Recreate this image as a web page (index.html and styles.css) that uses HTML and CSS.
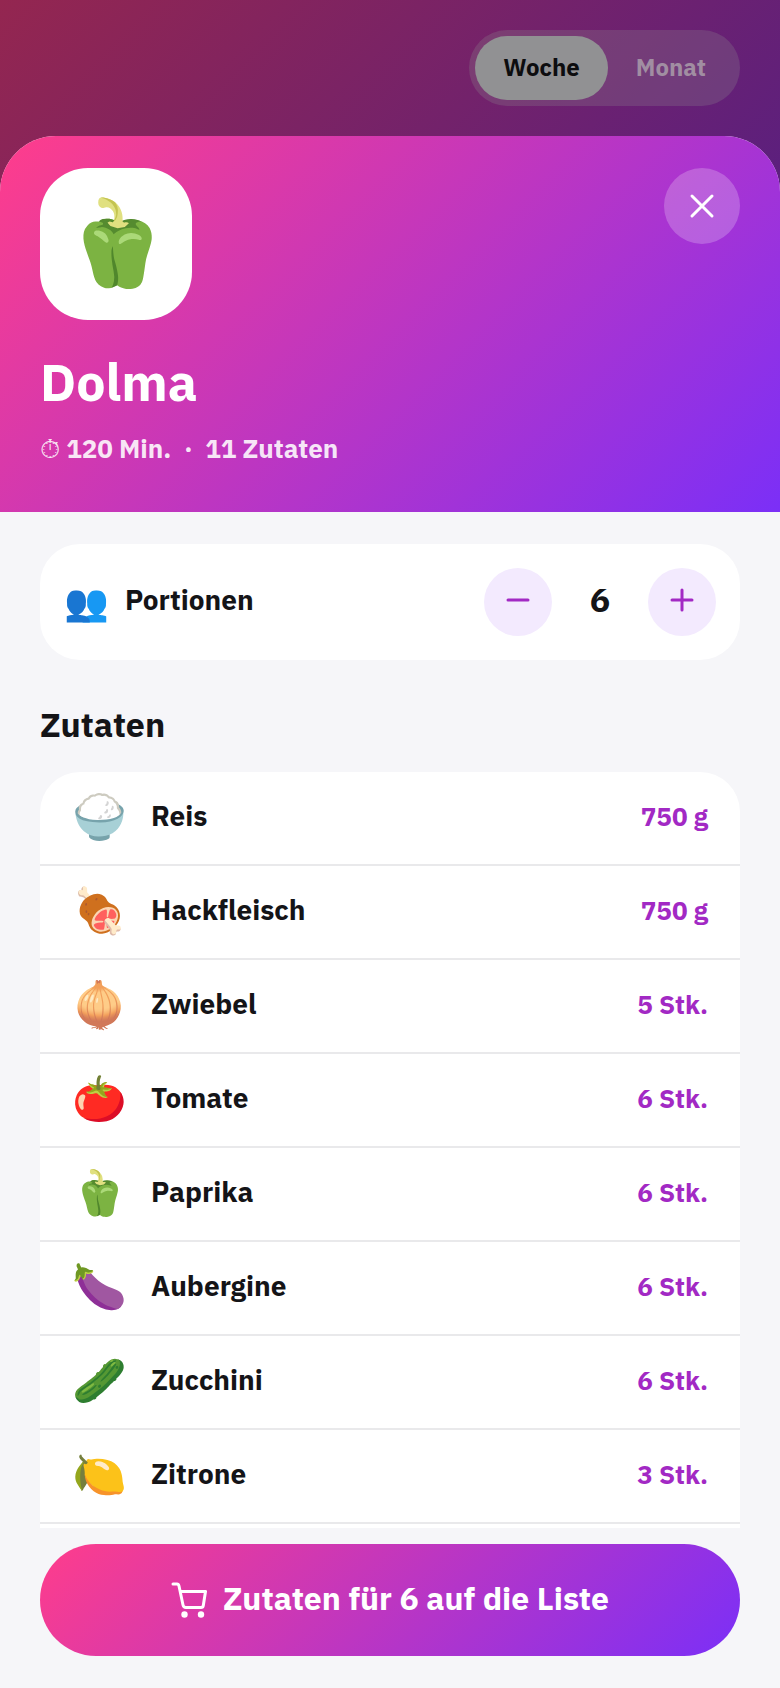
FILE: index.html
```html
<!DOCTYPE html>
<html lang="de">
<head>
<meta charset="utf-8">
<meta name="viewport" content="width=device-width, initial-scale=1">
<title>Dolma</title>
<link rel="stylesheet" href="styles.css">
</head>
<body class="page">
<header class="topbar">
  <div class="switch" role="group" aria-label="Zeitraum">
    <button class="switch-item switch-item-active" type="button">Woche</button>
    <button class="switch-item" type="button">Monat</button>
  </div>
</header>
<main class="sheet">
  <section class="hero">
    <div class="hero-top">
      <div class="dish"><span class="emoji-dish">🫑</span></div>
      <button class="close" type="button" aria-label="Schließen">
        <svg class="close-icon" viewBox="0 0 24 24" aria-hidden="true"><path d="M2 2 22 22M22 2 2 22"/></svg>
      </button>
    </div>
    <h1 class="dish-name">Dolma</h1>
    <p class="meta"><span class="clock">⏱</span> 120 Min. &nbsp;·&nbsp; 11 Zutaten</p>
  </section>
  <div class="content">
    <section class="portions">
      <span class="emoji-people">👥</span>
      <span class="portions-label">Portionen</span>
      <div class="stepper">
        <button class="step" type="button" aria-label="Weniger"><svg class="step-icon" viewBox="0 0 24 24" aria-hidden="true"><path d="M2 12H22"/></svg></button>
        <output class="count">6</output>
        <button class="step" type="button" aria-label="Mehr"><svg class="step-icon" viewBox="0 0 24 24" aria-hidden="true"><path d="M2 12H22M12 2V22"/></svg></button>
      </div>
    </section>
    <h2 class="heading">Zutaten</h2>
    <ul class="list">
      <li class="row"><span class="emoji">🍚</span><span class="name">Reis</span><span class="amount">750 g</span></li>
      <li class="row"><span class="emoji">🍖</span><span class="name">Hackfleisch</span><span class="amount">750 g</span></li>
      <li class="row"><span class="emoji">🧅</span><span class="name">Zwiebel</span><span class="amount">5 Stk.</span></li>
      <li class="row"><span class="emoji">🍅</span><span class="name">Tomate</span><span class="amount">6 Stk.</span></li>
      <li class="row"><span class="emoji">🫑</span><span class="name">Paprika</span><span class="amount">6 Stk.</span></li>
      <li class="row"><span class="emoji">🍆</span><span class="name">Aubergine</span><span class="amount">6 Stk.</span></li>
      <li class="row"><span class="emoji">🥒</span><span class="name">Zucchini</span><span class="amount">6 Stk.</span></li>
      <li class="row"><span class="emoji">🍋</span><span class="name">Zitrone</span><span class="amount">3 Stk.</span></li>
    </ul>
  </div>
  <footer class="footer">
    <button class="cta" type="button">
      <svg class="cart" viewBox="0 0 36 36" aria-hidden="true"><path class="cart-line" d="M2 2H6Q7.500 2 8 4L12 23Q12.500 25.500 15 25.500H30Q32 25.500 32.300 23.500L34.500 9.500H9.300"/><circle cx="13.500" cy="32.500" r="3.200"/><circle cx="30" cy="32.500" r="3.200"/></svg>
      <span class="cta-text">Zutaten für 6 auf die Liste</span>
    </button>
  </footer>
</main>
</body>
</html>
```
FILE: styles.css
```css
* { box-sizing: border-box; }

.page {
  margin: 0;
  min-height: 100vh;
  display: flex;
  flex-direction: column;
  font-family: "IBM Plex Sans", Roboto, "Noto Sans", sans-serif;
  font-weight: 700;
  color: #141417;
  background: linear-gradient(135deg, #942650 0, #5a1f7f 700px);
}

button { border: 0; padding: 0; font: inherit; color: inherit; cursor: pointer; }

.topbar {
  display: flex;
  justify-content: flex-end;
  padding: 30px 40px;
}

.switch {
  display: flex;
  padding: 6px;
  border-radius: 38px;
  background: rgba(142, 142, 142, 0.25);
}

.switch-item {
  height: 64px;
  padding: 0 28px 2px;
  border-radius: 32px;
  font-size: 24px;
  background: none;
  color: #a18ea2;
}

.switch-item-active { background: #919193; color: #0d0d0f; }

.sheet {
  flex: 1;
  display: flex;
  flex-direction: column;
  border-radius: 56px 56px 0 0;
  overflow: hidden;
  background: #f6f6f9;
}

.hero {
  padding: 32px 40px 48px;
  color: #fff;
  background: linear-gradient(135deg, #ff3d8b, #7b2ff7);
}

.hero-top {
  display: flex;
  justify-content: space-between;
  align-items: flex-start;
}

.dish {
  width: 152px;
  height: 152px;
  border-radius: 48px;
  display: grid;
  place-items: center;
  padding-bottom: 6px;
  background: #fff;
}

.emoji-dish { font-size: 84px; line-height: 96px; }

.close {
  width: 76px;
  height: 76px;
  border-radius: 50%;
  display: grid;
  place-items: center;
  background: rgba(255, 255, 255, 0.22);
}

.close-icon {
  width: 24px;
  height: 24px;
  overflow: visible;
  fill: none;
  stroke: #fff;
  stroke-width: 3;
  stroke-linecap: round;
}

.dish-name {
  margin: 30px 0 0;
  font-size: 52px;
  line-height: 64px;
}

.meta {
  margin: 18px 0 0;
  font-size: 26px;
  line-height: 32px;
  color: rgba(255, 255, 255, 0.88);
}

.clock { font-weight: 400; }

.content {
  flex: 1;
  display: flex;
  flex-direction: column;
  padding: 32px 40px 0;
}

.portions {
  display: flex;
  align-items: center;
  padding: 24px;
  border-radius: 40px;
  background: #fff;
}

.emoji-people { margin-right: 16px; padding-bottom: 2px; font-size: 36px; }
.portions-label { padding-bottom: 6px; font-size: 28px; }

.stepper {
  margin-left: auto;
  display: flex;
  align-items: center;
}

.step {
  width: 68px;
  height: 68px;
  border-radius: 50%;
  display: grid;
  place-items: center;
  padding-bottom: 4px;
  color: #a229c4;
  background: #f3eafe;
}

.step-icon {
  width: 24px;
  height: 24px;
  fill: none;
  stroke: currentColor;
  stroke-width: 3;
  stroke-linecap: round;
}

.count {
  width: 96px;
  padding-bottom: 6px;
  text-align: center;
  font-size: 34px;
}

.heading {
  margin: 42px 0 26px;
  font-size: 34px;
  line-height: 44px;
}

.list {
  flex: 1;
  margin: 0;
  padding: 0;
  list-style: none;
  border-radius: 40px 40px 0 0;
  background: #fff;
}

.row {
  display: flex;
  align-items: center;
  height: 94px;
  padding: 0 32px 4px;
  border-bottom: 2px solid #e9e9eb;
}

.emoji { width: 79px; font-size: 44px; line-height: 52px; }
.name { flex: 1; padding-bottom: 2px; font-size: 28px; }
.amount { font-size: 26px; color: #a229c4; }

.footer { padding: 16px 40px 32px; }

.cta {
  width: 100%;
  height: 112px;
  border-radius: 56px;
  display: flex;
  align-items: center;
  justify-content: center;
  gap: 16px;
  font-size: 32px;
  color: #fff;
  background: linear-gradient(135deg, #ff3d8b, #7b2ff7);
}

.cta-text { padding-bottom: 4px; }

.cart { width: 36px; height: 36px; fill: #fff; }

.cart-line {
  fill: none;
  stroke: #fff;
  stroke-width: 3;
  stroke-linecap: round;
  stroke-linejoin: round;
}
```
